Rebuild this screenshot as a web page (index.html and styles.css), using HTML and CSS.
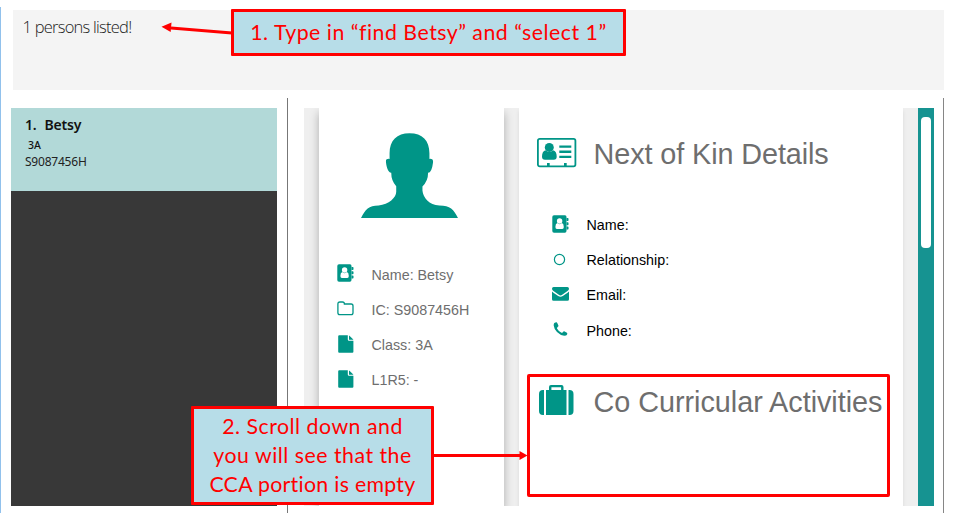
FILE: index.html
```html
<!DOCTYPE html>
<html lang="en">
<head>
<meta charset="utf-8">
<title>Find and select a person</title>
<link rel="stylesheet" href="styles.css">
</head>
<body>
<svg class="defs" aria-hidden="true">
  <symbol id="contact" viewBox="0 0 17 18">
    <path d="M2 .2h11Q14.500 .2 14.500 2v14q0 1.700-1.700 1.700H2Q.3 17.700.3 16V2Q.3.200 2 .2z"/>
    <path d="M14.500 3h1.300q.7 0 .7.700v1.500q0 .7-.7.700h-1.300zM14.500 7.300h1.300q.7 0 .7.700v1.500q0 .7-.7.700h-1.300zM14.500 11.600h1.300q.7 0 .7.700v1.500q0 .7-.7.700h-1.300z"/>
    <circle cx="7.600" cy="6" r="2.700" fill="#fff"/>
    <path fill="#fff" d="M5.300 8.100q-1.900.6-1.900 3.900 0 1.900 1.500 1.900h5.400q1.500 0 1.500-1.900 0-3.300-1.900-3.900-2.300 2.200-4.600 0z"/>
  </symbol>
  <symbol id="folder" viewBox="0 0 17 15">
    <path fill="none" stroke="currentColor" stroke-width="1.300" d="M.9 11.800V3Q.9 1 2.900 1h2.600q1.900 0 1.900 2h6.700q1.900 0 1.900 1.900v6.900q0 1.900-1.900 1.900H2.800Q.9 13.700.9 11.800z"/>
  </symbol>
  <symbol id="file" viewBox="0 0 16 18">
    <path d="M1.200.3h8.600v4.300q0 1.200 1.200 1.200h4.400v10.900q0 1-1 1H1.200q-1 0-1-1V1.300q0-1 1-1zM11 .4q.4.1.7.500L14.800 4q.4.400.5.700H11z"/>
  </symbol>
  <symbol id="ring" viewBox="0 0 17 17">
    <circle cx="8.500" cy="8.500" r="5.100" fill="none" stroke="currentColor" stroke-width="1.200"/>
  </symbol>
  <symbol id="mail" viewBox="0 0 17 14">
    <path d="M0 1.700Q0 .1 1.600.1h13.800Q17 .1 17 1.700 17 3 15.500 4.100L10.200 7.800Q8.500 9.200 6.800 7.800L1.500 4.100Q0 3 0 1.700z"/>
    <path d="M0 4.500q.4.500 6.200 4.500 2.300 1.600 4.600 0Q16.600 5 17 4.500v7.800q0 1.500-1.600 1.500H1.600Q0 13.800 0 12.300z"/>
  </symbol>
  <symbol id="phone" viewBox="0 0 17 14">
    <path d="M2.300 1Q3.700.1 4.600.3q.4 0 1.800 3.200.3.700-.5 1.300-1.200 1-.9 1.600 1.700 3.100 4.500 4.400.6.300 1.500-.9.700-.9 1.200-.6l2.700 1.500q.7.300.2 1.700-.5 1.300-2.900 1.300-3.800-.3-7.200-3.700Q2 7 1.700 3.600q-.1-1.700.6-2.600z"/>
  </symbol>
</svg>
<div class="page">
  <div class="result">1 persons listed!</div>
  <main class="main">
    <section class="list">
      <div class="person">
        <div class="person-name"><span class="num">1.</span>Betsy</div>
        <div class="person-class">3A</div>
        <div class="person-id">S9087456H</div>
      </div>
    </section>
    <section class="browser">
      <article class="card profile">
        <svg class="avatar" viewBox="212 113 292 256"><path d="M358 114C397 114 418 136 418 174V191Q430 190 429 201Q425 233 414 233Q414 258 397 274V286C399 307 417 330 448 331C481 331 491 343 504 369H212C225 343 235 331 265 331C296 329 318 307 318 290V273Q303 258 303 233C293 233 287 211 287 196Q287 190 298 191V174C298 136 320 114 358 114Z"/></svg>
        <ul class="rows">
          <li><svg class="i-contact"><use href="#contact"/></svg><span>Name: Betsy</span></li>
          <li><svg class="i-folder"><use href="#folder"/></svg><span>IC: S9087456H</span></li>
          <li><svg class="i-file"><use href="#file"/></svg><span>Class: 3A</span></li>
          <li><svg class="i-file"><use href="#file"/></svg><span>L1R5: -</span></li>
        </ul>
      </article>
      <article class="card details">
        <h2><svg class="idcard" viewBox="0 0 40 30">
          <rect x=".9" y=".9" width="37.500" height="27.500" rx="1.800" fill="none" stroke="currentColor" stroke-width="1.800"/>
          <circle cx="12.300" cy="9.400" r="4.500"/>
          <path d="M8.600 12.200Q5 13.200 5 18.500q0 3.200 3 3.200h8.700q3 0 3-3.200 0-5.300-3.600-6.300-3.800 3.300-7.500 0zM22.300 7.500h12v2.300h-12zM22.300 12.600h12v2.300h-12zM22.300 17.700h12V20h-12zM10 25h2.700v4H10zM27 25h2.700v4H27z"/>
        </svg>Next of Kin Details</h2>
        <ul class="rows">
          <li><svg class="i-contact"><use href="#contact"/></svg><span>Name:</span></li>
          <li><svg class="i-ring"><use href="#ring"/></svg><span>Relationship:</span></li>
          <li><svg class="i-mail"><use href="#mail"/></svg><span>Email:</span></li>
          <li><svg class="i-phone"><use href="#phone"/></svg><span>Phone:</span></li>
        </ul>
        <h2 class="cca"><svg class="suitcase" viewBox="0 0 35 30">
          <path d="M5 5v25H4q-4 0-4-4V9q0-4 4-4zM7 5h3V2q0-2 2-2h10.500q2 0 2 2v3h3v25H7zM12.400 2.300V5h9.700V2.300zM29.500 5h1q4 0 4 4v17q0 4-4 4h-1z"/>
        </svg>Co Curricular Activities</h2>
      </article>
      <div class="track"><div class="thumb"></div></div>
    </section>
  </main>

  <div class="frame"></div>
  <svg class="arrows" viewBox="0 0 956 513">
    <path class="line" d="M232 33L171 28M433 455.500H521"/>
    <path class="head" d="M161.500 26.700L171.500 22.500 170.700 32zM527.500 455.500L519.500 451v9z"/>
  </svg>
  <div class="note note-find">1. Type in “find Betsy” and “select 1”</div>
  <div class="note note-scroll"><span>2. Scroll down and</span><span>you will see that the</span><span class="tight">CCA portion is empty</span></div>
</div>
</body>
</html>
```

FILE: styles.css
```css
* { box-sizing: border-box; }
body { margin: 0; background: #fff; font-family: "Liberation Sans", Arial, sans-serif; }
.defs { position: absolute; width: 0; height: 0; }
svg { display: block; color: #009587; fill: currentColor; }
ul, h2 { margin: 0; padding: 0; list-style: none; font-weight: 400; }

.page { position: relative; width: 956px; height: 513px; padding-top: 10px; overflow: hidden;
  background: linear-gradient(#91c1ec, #91c1ec) 0 7px / 1px 506px no-repeat; }
.result { width: 931px; height: 80px; margin-left: 13px; padding: 6px 9.500px; background: #f4f4f4;
  color: #222; font: 300 16.500px/22px "Open Sans", "Noto Sans", sans-serif; letter-spacing: -.75px; }

.main { display: flex; width: 933px; height: 415px; margin: 8px 0 0 11px; padding: 10px 0 7px; border-right: 1px solid #868686; }
.list { width: 266px; background: #383838; }
.person { height: 83px; padding: 7px 14px; background: #b2d9d8; color: #111; font-family: "Noto Sans", sans-serif; }
.person-name { font-size: 14px; line-height: 20px; font-weight: 600; letter-spacing: -.2px; }
.num { display: inline-block; width: 19.500px; }
.person-class { padding-left: 3px; font-size: 10.500px; line-height: 20px; font-weight: 500; }
.person-id { font-size: 12px; line-height: 14px; color: #222; letter-spacing: -.22px; }

/* The browser pane starts with the split divider, followed by the two cards and the scrollbar. */
.browser { display: flex; width: 647px; margin-left: 10px; padding-left: 16px; clip-path: inset(-10px 0 -7px 0);
  background: linear-gradient(#efefef, #efefef) 17px 0 / 614px 100% no-repeat; }
.browser::before { content: ""; flex: none; width: 1px; margin: -10px 15px -7px -16px; background: #777; }
.card { flex: none; margin-left: 15px; background: #fff; }
.profile { width: 185px; margin-left: 16px; color: #6e6e6e; box-shadow: 0 5px 9px rgba(0,0,0,.28); clip-path: inset(0 -15px); }
.details { width: 384px; color: #000; box-shadow: 0 3px 4px rgba(0,0,0,.09); clip-path: inset(0 -15px); }
.avatar { width: 97px; height: 85px; margin: 25px 0 0 41.500px; }
.rows { display: grid; grid-auto-rows: 35.200px; font-size: 14.300px; }
.rows li { display: grid; grid-template-columns: 18px 1fr; column-gap: 17px; align-items: center; }
.rows svg { justify-self: center; }
.profile .rows { margin: 39px 0 0 17.500px; }
.details .rows { margin: 36.500px 0 0 32px; }
.details .rows li { column-gap: 17.500px; }
.i-contact { width: 17px; height: 18px; margin-top: -3px; }
.i-folder { width: 17px; height: 15px; margin-top: -3px; }
.i-file { width: 16px; height: 18px; margin-top: -2px; }
.rows .i-ring { width: 17px; height: 17px; margin: -2px 2px 0 0; }
.i-mail { width: 17px; height: 14px; margin-top: -2px; }
.i-phone { width: 17px; height: 14px; margin-top: -4px; }

h2 { display: flex; align-items: center; height: 33px; margin: 30px 0 0 17.500px; color: #6e6e6e; font-size: 28.800px; line-height: 33px; letter-spacing: -.09px; white-space: nowrap; }
.idcard { width: 40px; height: 30px; margin: -4px 17px 0 0; }
.cca { margin: 37.500px 0 0 20px; letter-spacing: -.03px; }
.suitcase { width: 35px; height: 30px; margin: -4px 19.500px 0 0; }

.track { flex: none; width: 16px; margin-left: 15px; padding: 9px 3px; background: #169391; }
.thumb { height: 131px; border-radius: 4px; background: #fff; }

.arrows { position: absolute; inset: 0; width: 956px; height: 513px; }
.line { fill: none; stroke: red; stroke-width: 3; }
.head { fill: red; }
.frame { position: absolute; left: 527px; top: 374px; width: 363px; height: 123px; border: 3px solid red; border-radius: 2px; }
.note { position: absolute; display: flex; flex-direction: column; align-items: center; justify-content: center; border: 3px solid red; border-radius: 1px;
  background: #b7dde8; color: red; font: 400 21.300px/29.200px Lato, sans-serif; letter-spacing: .5px; font-variant-ligatures: none; white-space: nowrap; }
.note-find { left: 231px; top: 9px; width: 395px; height: 47px; }
.note-scroll { left: 191px; top: 406px; width: 243px; height: 99px; }
.tight { letter-spacing: .3px; }
```
